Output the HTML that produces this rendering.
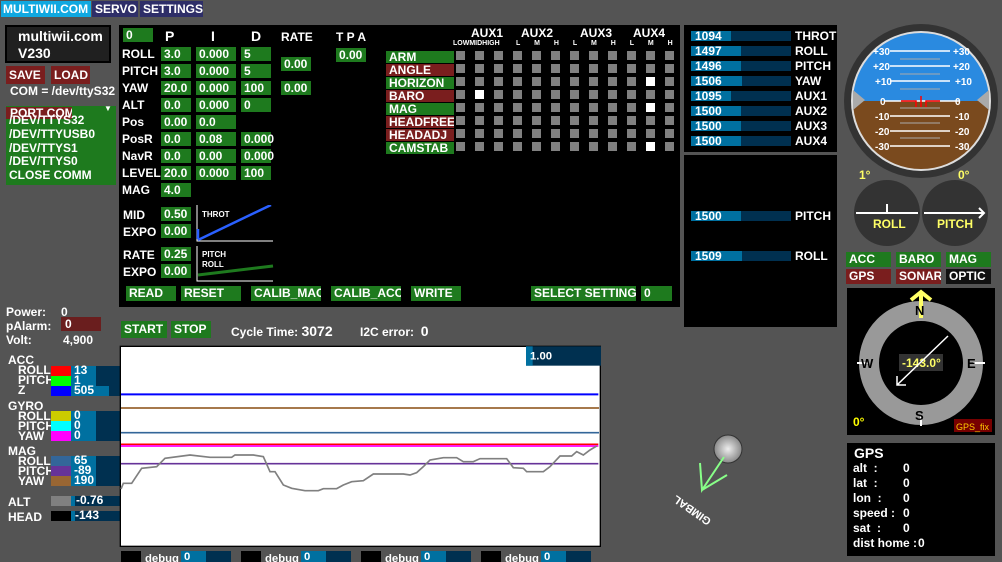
<!DOCTYPE html><html><head><meta charset="utf-8"><style>
*{margin:0;padding:0;box-sizing:border-box;white-space:nowrap}
body{width:1002px;height:562px;background:#545454;position:relative;overflow:hidden;font-family:"Liberation Sans",sans-serif;font-weight:bold;color:#fff;font-size:12px}
div,span{position:absolute}
.g{background:#1e7a1e;height:14px;line-height:15px;padding-left:3px;font-size:12px;overflow:hidden}
.r{background:#7a1e1e}
.l{font-size:12px;line-height:14px}
.bar{background:#003050;height:10px;width:100px}
.bar i{position:absolute;left:0;top:0;height:10px;background:#0070a0}
.bar b{position:absolute;left:4px;top:-2px;font-size:12px}
</style></head><body>
<div style="left:1px;top:1px;width:90px;height:16px;background:#10a8e0;font-size:12px;line-height:16px;padding-left:2px">MULTIWII.COM</div>
<div style="left:92px;top:1px;width:46px;height:16px;background:#2e2e68;line-height:16px;padding-left:3px">SERVO</div>
<div style="left:140px;top:1px;width:63px;height:16px;background:#2e2e68;line-height:16px;padding-left:3px">SETTINGS</div>
<div style="left:5px;top:25px;width:106px;height:38px;background:#202020;border:2px solid #000;font-size:14px;line-height:17px;padding:1px 0 0 11px">multiwii.com<br>V230</div>
<div class="g r" style="left:6px;top:66px;width:39px;height:18px;line-height:18px">SAVE</div>
<div class="g r" style="left:51px;top:66px;width:39px;height:18px;line-height:18px">LOAD</div>
<div style="left:10px;top:84px;font-size:12px">COM = /dev/ttyS32</div>
<div style="left:6px;top:106px;width:110px;height:79px;background:#1e7a1e"></div>
<div style="left:6px;top:107px;width:66px;height:12px;background:#7a1e1e;padding-left:4px;line-height:12px;font-size:12px;overflow:hidden">PORT COM</div>
<div style="left:104px;top:104px;font-size:8px">▼</div>
<div style="left:9px;top:114px;line-height:13.8px;font-size:12px">/DEV/TTYS32<br>/DEV/TTYUSB0<br>/DEV/TTYS1<br>/DEV/TTYS0<br>CLOSE COMM</div>

<div style="left:119px;top:25px;width:561px;height:282px;background:#000"></div>
<div class="g" style="left:123px;top:28px;width:30px">0</div>
<div class="l" style="left:165px;top:29px;font-size:14px">P</div>
<div class="l" style="left:211px;top:29px;font-size:14px">I</div>
<div class="l" style="left:251px;top:29px;font-size:14px">D</div>
<div class="l" style="left:281px;top:30px">RATE</div>
<div class="l" style="left:336px;top:30px">T P A</div>
<div class="l" style="left:122px;top:46px;line-height:17px">ROLL<br>PITCH<br>YAW<br>ALT<br>Pos<br>PosR<br>NavR<br>LEVEL<br>MAG</div>
<div class="g" style="left:161px;top:47px;width:30px">3.0</div><div class="g" style="left:196px;top:47px;width:40px">0.000</div><div class="g" style="left:241px;top:47px;width:30px">5</div>
<div class="g" style="left:161px;top:64px;width:30px">3.0</div><div class="g" style="left:196px;top:64px;width:40px">0.000</div><div class="g" style="left:241px;top:64px;width:30px">5</div>
<div class="g" style="left:161px;top:81px;width:30px">20.0</div><div class="g" style="left:196px;top:81px;width:40px">0.000</div><div class="g" style="left:241px;top:81px;width:30px">100</div>
<div class="g" style="left:161px;top:98px;width:30px">0.0</div><div class="g" style="left:196px;top:98px;width:40px">0.000</div><div class="g" style="left:241px;top:98px;width:30px">0</div>
<div class="g" style="left:161px;top:115px;width:30px">0.00</div><div class="g" style="left:196px;top:115px;width:40px">0.0</div>
<div class="g" style="left:161px;top:132px;width:30px">0.0</div><div class="g" style="left:196px;top:132px;width:40px">0.08</div><div class="g" style="left:241px;top:132px;width:30px;overflow:visible">0.000</div>
<div class="g" style="left:161px;top:149px;width:30px">0.0</div><div class="g" style="left:196px;top:149px;width:40px">0.00</div><div class="g" style="left:241px;top:149px;width:30px;overflow:visible">0.000</div>
<div class="g" style="left:161px;top:166px;width:30px">20.0</div><div class="g" style="left:196px;top:166px;width:40px">0.000</div><div class="g" style="left:241px;top:166px;width:30px">100</div>
<div class="g" style="left:161px;top:183px;width:30px">4.0</div>
<div class="g" style="left:281px;top:57px;width:30px">0.00</div>
<div class="g" style="left:281px;top:81px;width:30px">0.00</div>
<div class="g" style="left:336px;top:48px;width:30px">0.00</div>
<div class="l" style="left:123px;top:207px;line-height:17px">MID<br>EXPO</div>
<div class="l" style="left:123px;top:247px;line-height:17px">RATE<br>EXPO</div>
<div class="g" style="left:161px;top:207px;width:30px">0.50</div><div class="g" style="left:161px;top:224px;width:30px">0.00</div>
<div class="g" style="left:161px;top:247px;width:30px">0.25</div><div class="g" style="left:161px;top:264px;width:30px">0.00</div>
<svg style="position:absolute;left:195px;top:205px" width="80" height="80">
<path d="M2 0V36H78M2 41V76H78" stroke="#fff" fill="none"/>
<path d="M3 34V24M3 35L76 0" stroke="#2a60ff" stroke-width="2.5" fill="none"/>
<path d="M3 70L78 61" stroke="#1e7a1e" stroke-width="3" fill="none"/>
<text x="7" y="12" font-size="8" fill="#fff" font-family="Liberation Sans">THROT</text>
<text x="7" y="52" font-size="8" fill="#fff" font-family="Liberation Sans">PITCH</text>
<text x="7" y="62" font-size="8" fill="#fff" font-family="Liberation Sans">ROLL</text></svg>
<div class="g" style="left:126px;top:286px;width:50px;height:15px">READ</div>
<div class="g" style="left:181px;top:286px;width:60px;height:15px">RESET</div>
<div class="g" style="left:251px;top:286px;width:70px;height:15px">CALIB_MAG</div>
<div class="g" style="left:331px;top:286px;width:70px;height:15px">CALIB_ACC</div>
<div class="g" style="left:411px;top:286px;width:50px;height:15px">WRITE</div>
<div class="g" style="left:531px;top:286px;width:105px;height:15px">SELECT SETTING</div>
<div class="g" style="left:641px;top:286px;width:31px;height:15px">0</div>

<div class="l" style="left:471px;top:26px">AUX1</div><div class="l" style="left:521px;top:26px">AUX2</div><div class="l" style="left:580px;top:26px">AUX3</div><div class="l" style="left:633px;top:26px">AUX4</div>
<div style="left:453px;top:40px;font-size:7px;line-height:7px">LOWMIDHIGH</div>
<div style="left:516px;top:40px;font-size:7px;line-height:7px;word-spacing:12px">L M H L M H L M H</div>
<div class="g" style="left:386px;top:51px;width:68px;height:12px;line-height:12px">ARM</div>
<div class="g r" style="left:386px;top:64px;width:68px;height:12px;line-height:12px">ANGLE</div>
<div class="g" style="left:386px;top:77px;width:68px;height:12px;line-height:12px">HORIZON</div>
<div class="g r" style="left:386px;top:90px;width:68px;height:12px;line-height:12px">BARO</div>
<div class="g" style="left:386px;top:103px;width:68px;height:12px;line-height:12px">MAG</div>
<div class="g r" style="left:386px;top:116px;width:68px;height:12px;line-height:12px">HEADFREE</div>
<div class="g r" style="left:386px;top:129px;width:68px;height:12px;line-height:12px">HEADADJ</div>
<div class="g" style="left:386px;top:142px;width:68px;height:12px;line-height:12px">CAMSTAB</div>
<svg style="position:absolute;left:456px;top:51px" width="220" height="104">
<defs><pattern id="p" width="19" height="13" patternUnits="userSpaceOnUse"><rect width="9" height="9" fill="#808080"/></pattern></defs>
<rect width="218" height="104" fill="url(#p)"/>
<rect x="190" y="26" width="9" height="9" fill="#fff"/><rect x="19" y="39" width="9" height="9" fill="#fff"/>
<rect x="190" y="52" width="9" height="9" fill="#fff"/><rect x="190" y="91" width="9" height="9" fill="#fff"/></svg>

<div style="left:684px;top:25px;width:153px;height:127px;background:#000"></div>
<div style="left:684px;top:155px;width:153px;height:172px;background:#000"></div>
<div class="bar" style="left:691px;top:31px"><i style="width:40px"></i><b>1094</b></div><div class="l" style="left:795px;top:29px">THROT</div>
<div class="bar" style="left:691px;top:46px"><i style="width:50px"></i><b>1497</b></div><div class="l" style="left:795px;top:44px">ROLL</div>
<div class="bar" style="left:691px;top:61px"><i style="width:50px"></i><b>1496</b></div><div class="l" style="left:795px;top:59px">PITCH</div>
<div class="bar" style="left:691px;top:76px"><i style="width:51px"></i><b>1506</b></div><div class="l" style="left:795px;top:74px">YAW</div>
<div class="bar" style="left:691px;top:91px"><i style="width:40px"></i><b>1095</b></div><div class="l" style="left:795px;top:89px">AUX1</div>
<div class="bar" style="left:691px;top:106px"><i style="width:50px"></i><b>1500</b></div><div class="l" style="left:795px;top:104px">AUX2</div>
<div class="bar" style="left:691px;top:121px"><i style="width:50px"></i><b>1500</b></div><div class="l" style="left:795px;top:119px">AUX3</div>
<div class="bar" style="left:691px;top:136px"><i style="width:50px"></i><b>1500</b></div><div class="l" style="left:795px;top:134px">AUX4</div>
<div class="bar" style="left:691px;top:211px"><i style="width:50px"></i><b>1500</b></div><div class="l" style="left:795px;top:209px">PITCH</div>
<div class="bar" style="left:691px;top:251px"><i style="width:51px"></i><b>1509</b></div><div class="l" style="left:795px;top:249px">ROLL</div>

<svg style="position:absolute;left:840px;top:20px" width="162" height="270" font-family="Liberation Sans" font-weight="bold">
<defs><clipPath id="c"><circle cx="81" cy="81" r="68"/></clipPath></defs>
<circle cx="81" cy="81" r="77" fill="#333"/><circle cx="81" cy="81" r="70" fill="#ddd"/>
<g clip-path="url(#c)"><rect width="162" height="81" fill="#2a8ae0"/><rect y="81" width="162" height="90" fill="#7a4a1e"/></g>
<g stroke="#fff" stroke-width="1.5"><path d="M50 31H110M50 46H110M50 61H110M45 81H120M50 96H110M50 111H110M50 126H110"/></g>
<g stroke="#aaa"><path d="M60 39H100M60 54H100M60 69H100M60 88H100M60 103H100M60 118H100"/></g>
<path d="M61 81H76V87M81 76V87M86 87V81H100" stroke="red" stroke-width="1.5" fill="none"/>
<g fill="#fff" font-size="10"><text x="33" y="35">+30</text><text x="33" y="50">+20</text><text x="35" y="65">+10</text><text x="40" y="85">0</text><text x="35" y="100">-10</text><text x="35" y="115">-20</text><text x="35" y="130">-30</text>
<text x="113" y="35">+30</text><text x="113" y="50">+20</text><text x="115" y="65">+10</text><text x="115" y="85">0</text><text x="115" y="100">-10</text><text x="115" y="115">-20</text><text x="115" y="130">-30</text></g>
<path d="M13 70L25 80L13 90Z M149 70L137 80L149 90Z" fill="#aaa"/>
<text x="19" y="159" fill="#ff6" font-size="12">1°</text><text x="118" y="159" fill="#ff6" font-size="12">0°</text>
<circle cx="47" cy="193" r="33" fill="#333"/><circle cx="115" cy="193" r="33" fill="#333"/>
<path d="M16 193H78M47 193V184M84 193H144M139 188L144 193L139 198" stroke="#fff" stroke-width="2" fill="none"/>
<text x="33" y="208" fill="#ff6" font-size="12">ROLL</text><text x="97" y="208" fill="#ff6" font-size="12">PITCH</text></svg>
<div class="g" style="left:846px;top:252px;width:45px;height:15px">ACC</div>
<div class="g" style="left:896px;top:252px;width:45px;height:15px">BARO</div>
<div class="g" style="left:946px;top:252px;width:45px;height:15px">MAG</div>
<div class="g r" style="left:846px;top:269px;width:45px;height:15px">GPS</div>
<div class="g r" style="left:896px;top:269px;width:45px;height:15px">SONAR</div>
<div class="g" style="left:946px;top:269px;width:45px;height:15px;background:#111">OPTIC</div>

<svg style="position:absolute;left:847px;top:288px" width="148" height="147" font-family="Liberation Sans" font-weight="bold">
<rect width="148" height="147" fill="#000"/>
<circle cx="74" cy="75" r="52" fill="none" stroke="#999" stroke-width="20"/>
<path d="M74 6V30M64 12L74 4L84 12" stroke="#ff6" stroke-width="4" fill="none"/>
<path d="M10 75H22M126 75H138M74 128V138" stroke="#fff" stroke-width="2"/>
<text x="68" y="27" font-size="13">N</text><text x="68" y="132" font-size="13">S</text><text x="14" y="80" font-size="13">W</text><text x="120" y="80" font-size="13">E</text>
<rect x="52" y="66" width="44" height="17" fill="#333"/>
<text x="55" y="79" fill="#ff6" font-size="12">-143.0°</text>
<path d="M101 48L50 97M50 88V97H59" stroke="#fff" stroke-width="1.5" fill="none"/>
<text x="6" y="138" fill="#ff0" font-size="12">0°</text>
<rect x="107" y="131" width="38" height="13" fill="#700"/><text x="109" y="142" fill="#fc0" font-size="9" font-weight="normal">GPS_fix</text></svg>
<div style="left:847px;top:443px;width:148px;height:113px;background:#000"></div>
<div style="left:854px;top:445px;font-size:14px">GPS</div>
<div style="left:853px;top:461px;font-size:12px;line-height:15px">alt &nbsp;:<br>lat &nbsp;:<br>lon &nbsp;:<br>speed :<br>sat &nbsp;:<br>dist home :</div>
<div style="left:903px;top:461px;font-size:12px;line-height:15px">0<br>0<br>0<br>0<br>0</div>
<div style="left:918px;top:536px;font-size:12px">0</div>

<svg style="position:absolute;left:660px;top:425px" width="100" height="100" font-family="Liberation Sans" font-weight="bold">
<defs><radialGradient id="b"><stop offset="0" stop-color="#eee"/><stop offset="1" stop-color="#888"/></radialGradient></defs>
<ellipse cx="68" cy="24" rx="14" ry="14" fill="url(#b)" stroke="#333"/>
<path d="M64 32L42 65L40 38M42 65L67 50" stroke="#8f8" stroke-width="2" fill="none"/>
<text transform="translate(15 69) rotate(215)" x="-45" y="0" font-size="11" fill="#fff">GIMBAL</text></svg>

<div style="left:6px;top:305px;line-height:14px">Power:<br>pAlarm:<br>Volt:</div>
<div style="left:61px;top:305px">0</div>
<div style="left:61px;top:317px;width:40px;height:14px;background:#6a1e1e;padding-left:4px;line-height:14px">0</div>
<div style="left:63px;top:333px">4,900</div>
<div style="left:8px;top:355px;line-height:10px">ACC<br>&nbsp;&nbsp;&nbsp;ROLL<br>&nbsp;&nbsp;&nbsp;PITCH<br>&nbsp;&nbsp;&nbsp;Z</div>
<div style="left:8px;top:401px;line-height:10px">GYRO<br>&nbsp;&nbsp;&nbsp;ROLL<br>&nbsp;&nbsp;&nbsp;PITCH<br>&nbsp;&nbsp;&nbsp;YAW</div>
<div style="left:8px;top:446px;line-height:10px">MAG<br>&nbsp;&nbsp;&nbsp;ROLL<br>&nbsp;&nbsp;&nbsp;PITCH<br>&nbsp;&nbsp;&nbsp;YAW</div>
<div style="left:8px;top:495px">ALT</div><div style="left:8px;top:510px">HEAD</div>
<div style="left:51px;top:366px;width:70px;height:30px;background:#003050"></div>
<div style="left:51px;top:411px;width:70px;height:30px;background:#003050"></div>
<div style="left:51px;top:456px;width:70px;height:30px;background:#003050"></div>
<div style="left:71px;top:366px;width:25px;height:30px;background:#0070a0"></div>
<div style="left:96px;top:386px;width:13px;height:10px;background:#0070a0"></div>
<div style="left:71px;top:411px;width:25px;height:30px;background:#0070a0"></div>
<div style="left:71px;top:456px;width:25px;height:30px;background:#0070a0"></div>
<div style="left:51px;top:366px;width:20px;height:10px;background:#f00"></div>
<div style="left:51px;top:376px;width:20px;height:10px;background:#0f0"></div>
<div style="left:51px;top:386px;width:20px;height:10px;background:#00f"></div>
<div style="left:51px;top:411px;width:20px;height:10px;background:#cc0"></div>
<div style="left:51px;top:421px;width:20px;height:10px;background:#0ff"></div>
<div style="left:51px;top:431px;width:20px;height:10px;background:#f0f"></div>
<div style="left:51px;top:456px;width:20px;height:10px;background:#369"></div>
<div style="left:51px;top:466px;width:20px;height:10px;background:#639"></div>
<div style="left:51px;top:476px;width:20px;height:10px;background:#963"></div>
<div style="left:74px;top:365px;line-height:10px">13<br>1<br>505</div>
<div style="left:74px;top:410px;line-height:10px">0<br>0<br>0</div>
<div style="left:74px;top:455px;line-height:10px">65<br>-89<br>190</div>
<div style="left:51px;top:496px;width:20px;height:10px;background:#808080"></div>
<div style="left:71px;top:496px;width:50px;height:10px;background:#003050"></div><div style="left:71px;top:496px;width:4px;height:10px;background:#0070a0"></div>
<div style="left:76px;top:493px">-0.76</div>
<div style="left:51px;top:511px;width:20px;height:10px;background:#000"></div>
<div style="left:71px;top:511px;width:50px;height:10px;background:#003050"></div><div style="left:71px;top:511px;width:4px;height:10px;background:#0070a0"></div>
<div style="left:75px;top:508px">-143</div>

<div class="g" style="left:121px;top:321px;width:46px;height:17px;line-height:17px">START</div>
<div class="g" style="left:171px;top:321px;width:40px;height:17px;line-height:17px">STOP</div>
<div style="left:231px;top:323px;font-size:12px">Cycle Time: <span style="position:static;font-size:14px">3072</span></div>
<div style="left:360px;top:323px;font-size:12px">I2C error: &nbsp;<span style="position:static;font-size:14px">0</span></div>

<svg style="position:absolute;left:110px;top:340px" width="500" height="222" viewBox="0 0 1500 666">
<rect x="31" y="19" width="1440" height="600" fill="#fff" stroke="#000" stroke-width="4"/>
<rect x="1248" y="19" width="225" height="58" fill="#003050"/><rect x="1248" y="19" width="20" height="58" fill="#0070a0"/>
<text x="1260" y="58" font-size="34" fill="#fff" font-family="Liberation Sans" font-weight="bold">1.00</text>
<path d="M33 163H1465" stroke="#00f" stroke-width="6"/>
<path d="M33 204H1467" stroke="#963" stroke-width="5"/>
<path d="M33 278H1467" stroke="#369" stroke-width="5"/>
<path d="M33 313H1465" stroke="#f00" stroke-width="5"/>
<path d="M33 318H1465" stroke="#f0f" stroke-width="5"/>
<path d="M33 371H1465" stroke="#639" stroke-width="5"/>
<path d="M33 447L40 430L65 430L95 385L140 380L165 355L240 345L300 352L365 352L375 345L430 345L460 350L480 395L495 395L520 435L545 445L585 452L625 452L640 446L680 446L700 435L725 425L760 422L790 402L880 402L900 405L920 398L940 380L960 360L1000 353L1040 353L1060 365L1090 365L1110 356L1190 356L1210 383L1240 385L1250 395L1300 395L1320 380L1350 348L1385 348L1400 335L1420 345L1440 330L1460 318" stroke="#808080" stroke-width="5" fill="none"/>
<g font-family="Liberation Sans" font-weight="bold" font-size="34" fill="#fff">
<rect x="33" y="633" width="60" height="33" fill="#000"/><text x="105" y="666">debug</text><rect x="213" y="633" width="150" height="33" fill="#003050"/><rect x="213" y="633" width="75" height="33" fill="#0070a0"/><text x="222" y="660">0</text>
<rect x="393" y="633" width="60" height="33" fill="#000"/><text x="465" y="666">debug</text><rect x="573" y="633" width="150" height="33" fill="#003050"/><rect x="573" y="633" width="75" height="33" fill="#0070a0"/><text x="582" y="660">0</text>
<rect x="753" y="633" width="60" height="33" fill="#000"/><text x="825" y="666">debug</text><rect x="933" y="633" width="150" height="33" fill="#003050"/><rect x="933" y="633" width="75" height="33" fill="#0070a0"/><text x="942" y="660">0</text>
<rect x="1113" y="633" width="60" height="33" fill="#000"/><text x="1185" y="666">debug</text><rect x="1293" y="633" width="150" height="33" fill="#003050"/><rect x="1293" y="633" width="75" height="33" fill="#0070a0"/><text x="1302" y="660">0</text></g>
</svg>
</body></html>
